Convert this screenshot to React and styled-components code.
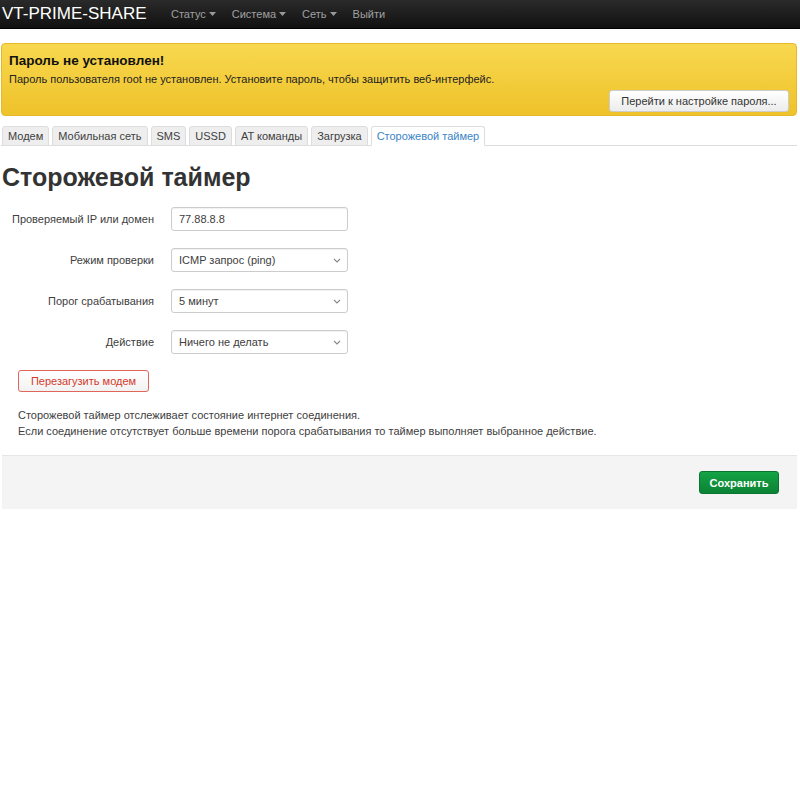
import styled, { createGlobalStyle } from 'styled-components';

const GlobalStyle = createGlobalStyle`
  html, body {
    margin: 0;
    padding: 0;
    background: #fff;
  }
  body {
    font-family: 'Liberation Sans', Arial, sans-serif;
    font-size: 11px;
    color: #404040;
  }
  * {
    box-sizing: border-box;
  }
`;

const menu = ['Статус', 'Система', 'Сеть'];
const tabs = ['Модем', 'Мобильная сеть', 'SMS', 'USSD', 'AT команды', 'Загрузка', 'Сторожевой таймер'];

const fields = [
  { label: 'Проверяемый IP или домен', value: '77.88.8.8', kind: 'input' },
  { label: 'Режим проверки', value: 'ICMP запрос (ping)', kind: 'select' },
  { label: 'Порог срабатывания', value: '5 минут', kind: 'select' },
  { label: 'Действие', value: 'Ничего не делать', kind: 'select' },
];

const Chevron = () => (
  <svg width='8' height='5' viewBox='0 0 8 5'>
    <path d='M1 1l3 3 3-3' fill='none' stroke='#888' strokeWidth='1.1' />
  </svg>
);

const Caret = () => (
  <svg width='7' height='4' viewBox='0 0 7 4'>
    <path d='M0 0h7L3.5 4z' fill='#999' />
  </svg>
);

const App = () => {
  return (
    <>
      <GlobalStyle />
      <NavBar>
        <Brand>VT-PRIME-SHARE</Brand>
        <Menu>
          {menu.map((item) => (
            <MenuItem key={item}>
              {item}
              <Caret />
            </MenuItem>
          ))}
          <MenuItem>Выйти</MenuItem>
        </Menu>
      </NavBar>
      <Main>
        <Alert>
          <h4>Пароль не установлен!</h4>
          <p>Пароль пользователя root не установлен. Установите пароль, чтобы защитить веб-интерфейс.</p>
          <div className='alert-actions'>
            <AlertButton>Перейти к настройке пароля...</AlertButton>
          </div>
        </Alert>
        <Tabs>
          {tabs.map((tab, index) => (
            <Tab key={tab} active={index === tabs.length - 1}>
              {tab}
            </Tab>
          ))}
        </Tabs>
        <Title>Сторожевой таймер</Title>
        <Form>
          {fields.map((field) => (
            <FormRow key={field.label}>
              <Label>{field.label}</Label>
              {field.kind === 'input' ? (
                <Input defaultValue={field.value} />
              ) : (
                <SelectBox>
                  <span>{field.value}</span>
                  <Chevron />
                </SelectBox>
              )}
            </FormRow>
          ))}
        </Form>
        <Section>
          <DangerButton>Перезагузить модем</DangerButton>
          <Description>
            Сторожевой таймер отслеживает состояние интернет соединения.
            <br />
            Если соединение отсутствует больше времени порога срабатывания то таймер выполняет выбранное действие.
          </Description>
        </Section>
        <Footer>
          <SaveButton>Сохранить</SaveButton>
        </Footer>
      </Main>
    </>
  );
};

const NavBar = styled.header`
  display: flex;
  align-items: center;
  height: 29px;
  padding: 0 2px;
  background: linear-gradient(#2a2a2a, #111);
  border-bottom: 1px solid #000;
`;

const Brand = styled.div`
  font-size: 17px;
  color: #fff;
  margin-right: 18px;
  width: 151px;
`;

const Menu = styled.nav`
  display: flex;
  align-items: center;
  gap: 16px;
`;

const MenuItem = styled.span`
  display: flex;
  align-items: center;
  gap: 3px;
  font-size: 11px;
  color: #a0a0a0;
`;

const Main = styled.main`
  padding: 14px 3px 0 1px;
`;

const Alert = styled.div`
  padding: 9px 7px 3px 7px;
  border: 1px solid #e5b82a;
  border-radius: 4px;
  background: linear-gradient(#f8d84f, #eec22a);
  color: #222;
  h4 {
    margin: 0 0 3px;
    font-size: 13.5px;
    line-height: 16px;
    font-weight: bold;
    color: #111;
  }
  p {
    margin: 0;
    font-size: 11px;
    line-height: 14px;
  }
  .alert-actions {
    display: flex;
    justify-content: flex-end;
    margin-top: 4px;
  }
`;

const AlertButton = styled.button`
  width: 180px;
  height: 22px;
  padding: 0 8px;
  border: 1px solid #ccc;
  border-radius: 3px;
  background: linear-gradient(#fff, #ececec);
  font-family: inherit;
  font-size: 11px;
  color: #333;
`;

const Tabs = styled.ul`
  display: flex;
  gap: 3px;
  margin: 10px 0 0;
  padding: 0 0 0 1px;
  list-style: none;
  border-bottom: 1px solid #ddd;
`;

const Tab = styled.li`
  height: 20px;
  line-height: 19px;
  padding: 0 5px;
  margin-bottom: -1px;
  font-size: 11px;
  border: 1px solid #ddd;
  border-bottom-color: ${(p) => (p.active ? '#fff' : '#ddd')};
  border-radius: 3px 3px 0 0;
  background: ${(p) => (p.active ? '#fff' : '#eee')};
  color: ${(p) => (p.active ? '#3a84c8' : '#404040')};
`;

const Title = styled.h2`
  margin: 16px 0 15px 1px;
  font-size: 25px;
  line-height: 30px;
  font-weight: bold;
  color: #333;
`;

const Form = styled.div`
  display: flex;
  flex-direction: column;
  gap: 17px;
`;

const FormRow = styled.div`
  display: grid;
  grid-template-columns: 153px 177px;
  column-gap: 17px;
  align-items: center;
`;

const Label = styled.label`
  text-align: right;
  font-size: 11px;
  color: #404040;
`;

const Input = styled.input`
  height: 24px;
  padding: 0 7px;
  border: 1px solid #ccc;
  border-radius: 3px;
  box-shadow: inset 0 1px 1px rgba(0, 0, 0, 0.06);
  font-family: inherit;
  font-size: 11px;
  color: #404040;
  outline: none;
`;

const SelectBox = styled.div`
  display: flex;
  align-items: center;
  justify-content: space-between;
  height: 24px;
  padding: 0 6px 0 7px;
  border: 1px solid #ccc;
  border-radius: 3px;
  box-shadow: inset 0 1px 1px rgba(0, 0, 0, 0.06);
  font-size: 11px;
  color: #404040;
  background: #fff;
`;

const Section = styled.div`
  padding: 16px 0 16px 17px;
`;

const DangerButton = styled.button`
  width: 131px;
  height: 22px;
  padding: 0;
  border: 1px solid #e0665a;
  border-radius: 3px;
  background: linear-gradient(#fff, #f2f2f2);
  font-family: inherit;
  font-size: 11px;
  color: #d43a2b;
`;

const Description = styled.p`
  margin: 15px 0 0;
  font-size: 11px;
  line-height: 16px;
  color: #404040;
`;

const Footer = styled.div`
  display: flex;
  justify-content: flex-end;
  align-items: center;
  height: 54px;
  margin-left: 1px;
  padding-right: 18px;
  background: #f4f4f4;
  border-top: 1px solid #e6e6e6;
`;

const SaveButton = styled.button`
  width: 80px;
  height: 23px;
  padding: 0;
  border: 1px solid #0a7430;
  border-radius: 3px;
  background: linear-gradient(#14a345, #0b8234);
  font-family: inherit;
  font-size: 11px;
  font-weight: bold;
  color: #fff;
`;

export default App;
